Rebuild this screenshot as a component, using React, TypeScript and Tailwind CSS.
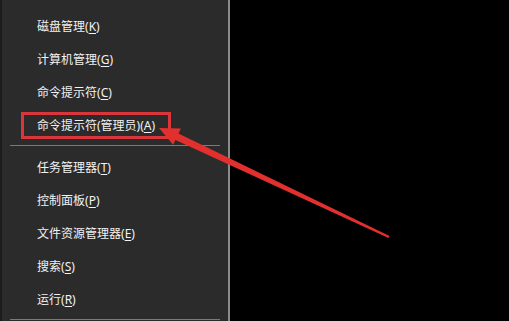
const groups = [
  [
    { label: "磁盘管理", key: "K" },
    { label: "计算机管理", key: "G" },
    { label: "命令提示符", key: "C" },
    { label: "命令提示符(管理员)", key: "A" },
  ],
  [
    { label: "任务管理器", key: "T" },
    { label: "控制面板", key: "P" },
    { label: "文件资源管理器", key: "E" },
    { label: "搜索", key: "S" },
    { label: "运行", key: "R" },
  ],
];

function MenuItem({ label, hotkey }: { label: string; hotkey: string }) {
  return (
    <div className="flex h-[33px] items-center pl-[35px] text-[12px] text-[#f2f2f2]">
      <span>
        {label}(<span className="underline underline-offset-2">{hotkey}</span>)
      </span>
    </div>
  );
}

export default function App() {
  return (
    <div
      className="relative flex h-[321px] w-[509px] overflow-hidden bg-black"
      style={{ fontFamily: '"Noto Sans", "Noto Sans CJK SC", sans-serif' }}
    >
      {/* context menu */}
      <div className="h-full w-[230px] border-l-2 border-r-2 border-l-[#1c1c1c] border-r-[#8a8a8a] bg-[#2b2b2b] pt-[10px]">
        {groups.map((items, gi) => (
          <div key={gi}>
            {items.map((it) => (
              <MenuItem key={it.label} label={it.label} hotkey={it.key} />
            ))}
            <div className="mx-[8px] mt-[3px] mb-[5px] h-px bg-[#7a7a7a]" />
          </div>
        ))}
      </div>

      {/* highlight box */}
      <div className="absolute left-[21px] top-[112px] h-[27px] w-[150px] border-[3px] border-[#d8363b]" />

      {/* arrow */}
      <svg className="absolute left-0 top-0" width="509" height="321" viewBox="0 0 509 321">
        <polygon
          fill="#e2302f"
          points="159,128 180.9,128.6 178.5,133.5 389.5,235.9 388.5,238.1 175.5,139.9 173.1,144.8"
        />
      </svg>
    </div>
  );
}
